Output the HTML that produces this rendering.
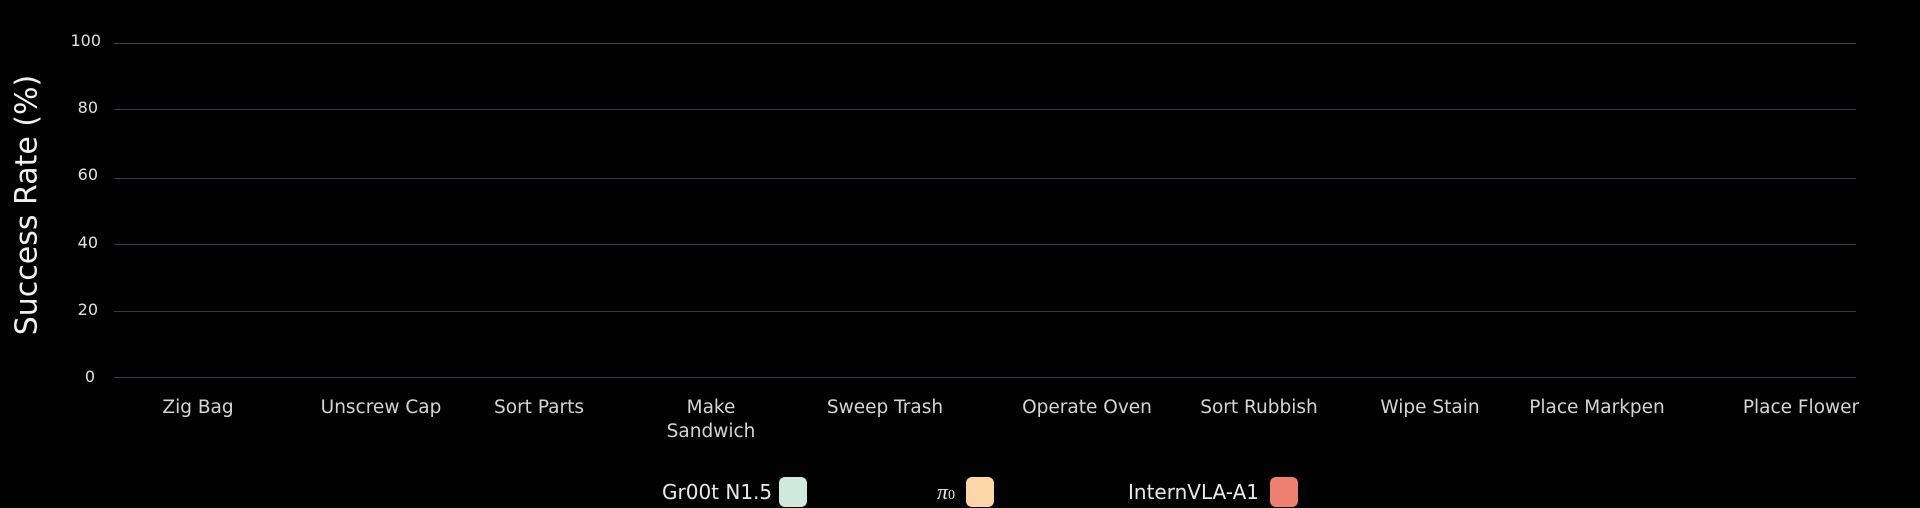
<!DOCTYPE html>
<html><head><meta charset="utf-8"><style>
html,body{margin:0;padding:0;background:#020202;}
body{width:1920px;height:508px;position:relative;overflow:hidden;font-family:"DejaVu Sans","Liberation Sans",sans-serif;color:#d8d8d8;}
.g{position:absolute;left:114px;width:1742px;height:0;border-top:1px solid #3a3a4a;}
.t{position:absolute;width:60px;text-align:right;font-size:16px;line-height:16px;color:#e0e0e0;}
.c{position:absolute;font-size:18.5px;line-height:24px;text-align:center;width:200px;margin-left:-100px;color:#d4d4d4;}
.lg{position:absolute;font-size:20px;line-height:24px;color:#e8e8e8;top:480px;}
.bx{position:absolute;top:477px;width:28px;height:30px;border-radius:6px;}
</style></head><body>
<div class="g" style="top:43px;border-color:#4a4a2a"></div>
<div class="g" style="top:109px"></div>
<div class="g" style="top:178px"></div>
<div class="g" style="top:244px"></div>
<div class="g" style="top:311px;border-color:#3d3d2e"></div>
<div class="g" style="top:377px"></div>
<div class="t" style="top:33px;right:1819px">100</div>
<div class="t" style="top:100px;right:1822px">80</div>
<div class="t" style="top:167px;right:1822px">60</div>
<div class="t" style="top:235px;right:1822px">40</div>
<div class="t" style="top:302px;right:1822px">20</div>
<div class="t" style="top:369px;right:1825px">0</div>
<div style="position:absolute;left:27px;top:205px;transform:translate(-50%,-50%) rotate(-90deg);font-size:30px;white-space:nowrap;color:#f0f0f0;">Success Rate (%)</div>
<div class="c" style="left:198px;top:396px">Zig Bag</div>
<div class="c" style="left:381px;top:396px">Unscrew Cap</div>
<div class="c" style="left:539px;top:396px">Sort Parts</div>
<div class="c" style="left:711px;top:396px">Make<br>Sandwich</div>
<div class="c" style="left:885px;top:396px">Sweep Trash</div>
<div class="c" style="left:1087px;top:396px">Operate Oven</div>
<div class="c" style="left:1259px;top:396px">Sort Rubbish</div>
<div class="c" style="left:1430px;top:396px">Wipe Stain</div>
<div class="c" style="left:1597px;top:396px">Place Markpen</div>
<div class="c" style="left:1801px;top:396px">Place Flower</div>
<div class="lg" style="left:662px">Gr00t N1.5</div>
<div class="bx" style="left:779px;background:#cfe9dc"></div>
<div class="lg" style="left:937px;font-family:'Liberation Serif',serif;font-style:italic;font-size:22px">π<span style="font-style:normal;font-size:14px">0</span></div>
<div class="bx" style="left:966px;background:#fbd6a6"></div>
<div class="lg" style="left:1128px">InternVLA-A1</div>
<div class="bx" style="left:1270px;background:#ee8070"></div>
</body></html>
